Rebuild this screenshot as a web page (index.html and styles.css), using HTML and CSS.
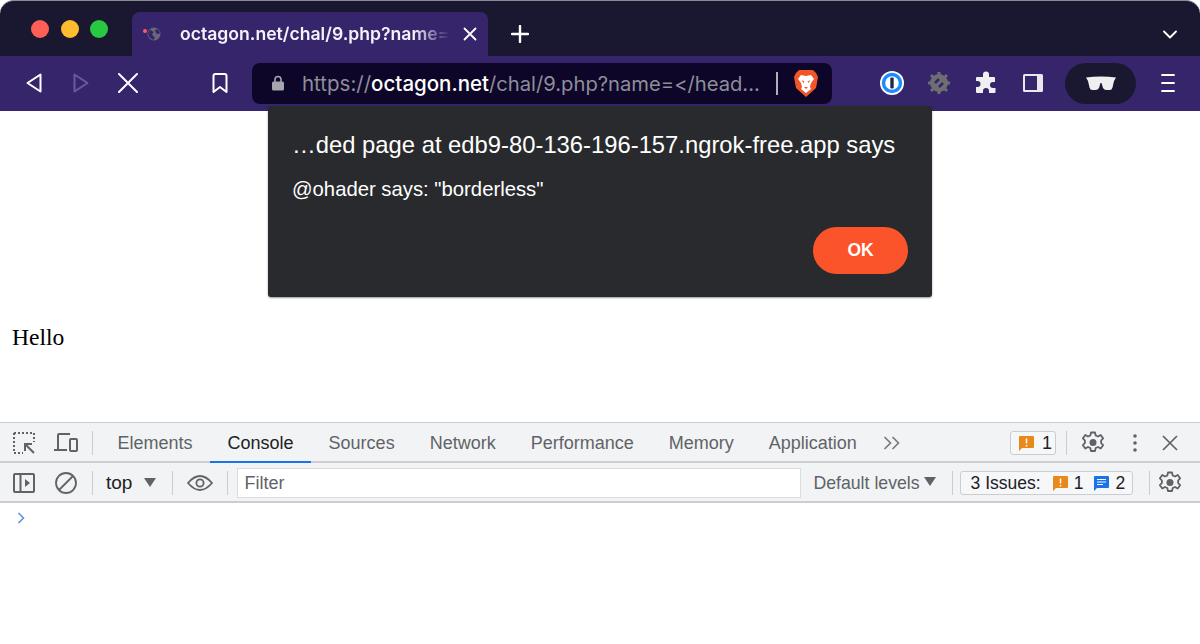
FILE: index.html
```html
<!DOCTYPE html>
<html lang="en">
  <head>
    <meta charset="UTF-8" />
    <meta name="viewport" content="width=device-width, initial-scale=1.0" />
    <title>octagon.net/chal/9.php</title>
    <link rel="stylesheet" href="styles.css">
  </head>
  <body>
    <div class="browser">
      <div class="tabstrip">
        <div class="lights">
          <span class="light red"></span>
          <span class="light yellow"></span>
          <span class="light green"></span>
        </div>
        <div class="tab">
          <span class="tab-dot"></span>
          <svg class="tab-globe" viewBox="0 0 14 14"><circle cx="7" cy="7" r="6.5" fill="#686878"/><path d="M3 2.5 6.5 5 5 7.5 8 11 6 13 2 10 1 6ZM9 2l3 1.5 1 3-3 .5-2-2.500Z" fill="#37256b"/></svg>
          <span class="tab-title">octagon.net/chal/9.php?name=</span>
          <svg class="tab-close" viewBox="0 0 14 14"><path d="M1.500 1.500l11 11M12.500 1.500l-11 11" stroke="#fff" stroke-width="1.800" stroke-linecap="round"/></svg>
        </div>
        <svg class="tab-new" viewBox="0 0 18 18"><path d="M9 1v16M1 9h16" stroke="#fff" stroke-width="2.400" stroke-linecap="round"/></svg>
        <svg class="tab-list" viewBox="0 0 14 9"><path d="M1 1.500l6 6 6-6" fill="none" stroke="#fff" stroke-width="1.800" stroke-linecap="round" stroke-linejoin="round"/></svg>
      </div>

      <div class="toolbar">
        <div class="tb-btn back">
          <svg class="ic-nav" viewBox="0 0 16 20"><path d="M14.500 1.500v17L1.500 10Z" fill="none" stroke="#fff" stroke-width="2" stroke-linejoin="round"/></svg>
        </div>
        <div class="tb-btn">
          <svg class="ic-nav" viewBox="0 0 16 20"><path d="M1.500 1.500v17l13-8.500Z" fill="none" stroke="#6a5a99" stroke-width="2" stroke-linejoin="round"/></svg>
        </div>
        <div class="tb-btn">
          <svg class="ic-stop" viewBox="0 0 20 20"><path d="M1 1l18 18M19 1 1 19" stroke="#fff" stroke-width="2" stroke-linecap="round"/></svg>
        </div>
        <div class="tb-btn bookmark">
          <svg class="ic-mark" viewBox="0 0 16 20"><path d="M1.500 3q0-2 2-2h9q2 0 2 2v16l-6.500-5-6.500 5Z" fill="none" stroke="#fff" stroke-width="2" stroke-linejoin="round"/></svg>
        </div>
        <div class="urlbar">
          <svg class="ic-lock" viewBox="0 0 12 16"><path d="M3 7V4.500a3 3 0 0 1 6 0V7" fill="none" stroke="#a5a5ad" stroke-width="1.600"/><rect y="6.500" width="12" height="9" rx="1.500" fill="#a5a5ad"/></svg>
          <span class="url">https://<b>octagon.net</b><span class="url-path">/chal/9.php?name=&lt;/head...</span></span>
          <span class="url-sep"></span>
          <svg class="ic-brave" viewBox="0 0 24 28">
            <path d="M5 1h14l3 3 2 4-2 11-10 9-10-9L0 8l2-4Z" fill="#f1562b"/>
            <path d="M7 6l5 1 5-1 3 4-3 4-1 4 1 2-5 4-5-4 1-2-1-4-3-4Z" fill="#fff"/>
            <path d="M7.500 11l3 1.500-1 1.500ZM16.500 11l-3 1.500 1 1.500ZM10 18h4l-2 2Z" fill="#f1562b"/>
          </svg>
        </div>
        <div class="tb-btn onepass">
          <svg class="ic-ext" viewBox="0 0 24 24"><circle cx="12" cy="12" r="12" fill="#fff"/><circle cx="12" cy="12" r="8.500" fill="none" stroke="#1a8cff" stroke-width="3.400"/><rect x="10.300" y="6.500" width="3.400" height="11" rx="1" fill="#1d2a4d"/></svg>
        </div>
        <div class="tb-btn">
          <svg class="ic-ext" viewBox="0 0 24 24">
            <path d="M12 1v22M1 12h22M4 4l16 16M20 4 4 20" stroke="#6f6f73" stroke-width="3"/>
            <circle cx="12" cy="12" r="9" fill="#6f6f73"/>
            <path d="M8 12l4-4M12 16l4-4" stroke="#37256b" stroke-width="2.600"/>
          </svg>
        </div>
        <div class="tb-btn">
          <svg class="ic-ext" viewBox="0 0 24 24"><path d="M9 3.500a3 3 0 0 1 6 0V6h5a1 1 0 0 1 1 1v4h-2a3 3 0 0 0 0 6h2.500v4a1 1 0 0 1-1 1H15v-2a3 3 0 0 0-6 0v2H3a1 1 0 0 1-1-1v-5h1.500a3 3 0 0 0 0-6H2V7a1 1 0 0 1 1-1h6Z" fill="#f0f0f2"/></svg>
        </div>
        <div class="tb-btn">
          <svg class="ic-panel" viewBox="0 0 20 18"><rect width="20" height="18" rx="1.500" fill="#e8e8ec"/><rect x="2" y="2" width="12" height="14" fill="#37256b"/></svg>
        </div>
        <div class="incognito">
          <svg class="ic-glasses" viewBox="0 0 30 15"><path d="M0 1.500Q15-.5 30 1.500L28 5l-1.500 6.500q-.5 2.500-3 2.500h-3q-2.500 0-3.500-2L15.500 7h-1L13 12q-1 2-3.500 2h-3q-2.500 0-3-2.500L2 5Z" fill="#efeff1"/></svg>
        </div>
        <div class="tb-btn menu">
          <svg class="ic-menu" viewBox="0 0 14 20"><path d="M1 2h12M1 10h12M1 18h12" stroke="#fff" stroke-width="1.800" stroke-linecap="round"/></svg>
        </div>
      </div>
    </div>

    <div class="page">
      <p class="hello">Hello</p>
      <div class="alert">
        <div class="alert-title">…ded page at edb9-80-136-196-157.ngrok-free.app says</div>
        <div class="alert-msg">@ohader says: "borderless"</div>
        <div class="alert-actions">
          <button class="alert-ok">OK</button>
        </div>
      </div>
    </div>

    <div class="devtools">
      <div class="dt-row tabs-row">
        <div class="dt-icon">
          <svg class="ic-dt" viewBox="0 0 22 22">
            <path d="M1 1h20v9M1 1v20h9" fill="none" stroke="#5f6368" stroke-width="2" stroke-dasharray="2 2"/>
            <path d="M21 21l-8-8M12 19v-7h7" fill="none" stroke="#5f6368" stroke-width="2"/>
          </svg>
        </div>
        <div class="dt-icon">
          <svg class="ic-dt wide" viewBox="0 0 24 20">
            <path d="M15 2V1H5q-1 0-1 1v14M0 17h13" fill="none" stroke="#5f6368" stroke-width="2"/>
            <rect x="16" y="6" width="7" height="12" rx="1" fill="none" stroke="#5f6368" stroke-width="2"/>
          </svg>
        </div>
        <span class="dt-sep"></span>
        <div class="tabs">
          <span class="dt-tab">Elements</span>
          <span class="dt-tab active">Console</span>
          <span class="dt-tab">Sources</span>
          <span class="dt-tab">Network</span>
          <span class="dt-tab">Performance</span>
          <span class="dt-tab">Memory</span>
          <span class="dt-tab">Application</span>
        </div>
        <svg class="ic-more" viewBox="0 0 18 14"><path d="M1.500 1l6 6-6 6M9.500 1l6 6-6 6" fill="none" stroke="#777b80" stroke-width="1.700"/></svg>
        <div class="dt-right">
          <div class="badge top-badge">
            <svg class="ic-warn" viewBox="0 0 15 15"><path d="M0 1q0-1 1-1h13q1 0 1 1v10q0 1-1 1H3l-3 3Z" fill="#e8891c"/><path d="M7.500 2.500v5M7.500 9v1.500" stroke="#fff" stroke-width="1.500"/></svg>
            <span>1</span>
          </div>
          <span class="dt-sep"></span>
          <svg class="ic-gear top-gear" viewBox="0 0 24 24"><use href="#gear"/></svg>
          <svg class="ic-dots" viewBox="0 0 4 18"><circle cx="2" cy="2" r="1.800"/><circle cx="2" cy="9" r="1.800"/><circle cx="2" cy="16" r="1.800"/></svg>
          <svg class="ic-x" viewBox="0 0 16 16"><path d="M1 1l14 14M15 1 1 15" stroke="#5f6368" stroke-width="1.700"/></svg>
        </div>
      </div>

      <div class="dt-row filter-row">
        <div class="dt-icon">
          <svg class="ic-dt" viewBox="0 0 22 20"><rect x="1" y="1" width="20" height="18" rx="1" fill="none" stroke="#5f6368" stroke-width="2"/><path d="M7.500 1v18" stroke="#5f6368" stroke-width="2"/><path d="M12 6l5 4-5 4Z" fill="#5f6368"/></svg>
        </div>
        <div class="dt-icon">
          <svg class="ic-dt" viewBox="0 0 22 22"><circle cx="11" cy="11" r="10" fill="none" stroke="#5f6368" stroke-width="1.800"/><path d="M4 18 18 4" stroke="#5f6368" stroke-width="1.800"/></svg>
        </div>
        <span class="dt-sep"></span>
        <span class="ctx">top</span>
        <span class="arrow ctx-arrow"></span>
        <span class="dt-sep"></span>
        <svg class="ic-eye" viewBox="0 0 26 16"><path d="M1 8q12-14 24 0Q13 22 1 8Z" fill="none" stroke="#5f6368" stroke-width="1.800"/><circle cx="13" cy="8" r="3.600" fill="none" stroke="#5f6368" stroke-width="1.800"/></svg>
        <span class="dt-sep"></span>
        <div class="filter">Filter</div>
        <span class="levels">Default levels</span>
        <span class="arrow levels-arrow"></span>
        <span class="dt-sep"></span>
        <div class="badge issues">
          <span class="issues-label">3 Issues:</span>
          <svg class="ic-warn" viewBox="0 0 15 15"><path d="M0 1q0-1 1-1h13q1 0 1 1v10q0 1-1 1H3l-3 3Z" fill="#e8891c"/><path d="M7.500 2.500v5M7.500 9v1.500" stroke="#fff" stroke-width="1.500"/></svg>
          <span class="issue-count">1</span>
          <svg class="ic-warn info" viewBox="0 0 15 15"><path d="M0 1q0-1 1-1h13q1 0 1 1v10q0 1-1 1H3l-3 3Z" fill="#1a73e8"/><path d="M3 3.500h9M3 6h9M3 8.500h6" stroke="#fff" stroke-width="1.200"/></svg>
          <span class="issue-count">2</span>
        </div>
        <span class="dt-sep"></span>
        <svg class="ic-gear" viewBox="0 0 24 24"><use href="#gear"/></svg>
      </div>

      <div class="console">
        <svg class="ic-prompt" viewBox="0 0 8 12"><path d="M1.500 1l5 5-5 5" fill="none" stroke="#5b8fdc" stroke-width="1.500"/></svg>
      </div>
    </div>

    <svg class="defs" viewBox="0 0 24 24">
      <symbol id="gear" viewBox="0 0 24 24">
        <path d="M10 1.500h4l.7 3 2.300 1 2.700-1.600 2.400 3.400-2 2.200v2.500l2 2.200-2.400 3.400-2.700-1.600-2.300 1-.7 3h-4l-.7-3-2.300-1-2.700 1.600-2.400-3.400 2-2.200V9.500l-2-2.200L4.300 3.900 7 5.500l2.300-1Z" fill="none" stroke="#5f6368" stroke-width="1.800" stroke-linejoin="round"/>
        <circle cx="12" cy="11.500" r="3.500" fill="#5f6368"/>
      </symbol>
    </svg>
  </body>
</html>
```

FILE: styles.css
```css
* {
  box-sizing: border-box;
}
body {
  margin: 0;
  width: 1200px;
  height: 644px;
  overflow: hidden;
  display: flex;
  flex-direction: column;
  background: #fff;
  font-family: "Liberation Sans", Arial, sans-serif;
}
.defs {
  display: none;
}

/* browser chrome */
.browser {
  height: 111px;
  flex: none;
  display: flex;
  flex-direction: column;
  border-radius: 14px 14px 0 0;
  border-top: 1px solid #8d8c96;
  overflow: hidden;
  background: #1a1830;
}
.tabstrip {
  height: 55px;
  flex: none;
  display: flex;
  align-items: flex-end;
  position: relative;
}
.lights {
  width: 132px;
  height: 55px;
  padding: 19px 0 0 31px;
  display: flex;
  gap: 11.600px;
}
.light {
  width: 18px;
  height: 18px;
  border-radius: 50%;
}
.red {
  background: #ff5f57;
}
.yellow {
  background: #febc2e;
}
.green {
  background: #28c840;
}
.tab {
  width: 356px;
  height: 44px;
  display: flex;
  align-items: center;
  background: #37256b;
  border-radius: 8px 8px 0 0;
  padding-left: 11px;
  position: relative;
}
.tab-dot {
  width: 4px;
  height: 4px;
  border-radius: 50%;
  background: #ff5a5f;
  margin-top: -7px;
  flex: none;
}
.tab-globe {
  width: 14px;
  height: 14px;
  flex: none;
}
.tab-title {
  margin-left: 19px;
  margin-bottom: 2px;
  width: 272px;
  overflow: hidden;
  white-space: nowrap;
  font-family: Inter, sans-serif;
  font-size: 17.600px;
  font-weight: 600;
  color: #f4f2fa;
  flex: none;
  -webkit-mask-image: linear-gradient(to right, #000 86%, transparent 99%);
  mask-image: linear-gradient(to right, #000 86%, transparent 99%);
}
.tab-close {
  width: 14px;
  height: 14px;
  margin-left: 11px;
  flex: none;
}
.tab-new {
  width: 18px;
  height: 18px;
  margin: 0 0 13px 23px;
}
.tab-list {
  width: 14px;
  height: 9px;
  margin: 0 23px 17px auto;
}
.toolbar {
  height: 55px;
  flex: none;
  display: flex;
  align-items: center;
  background: #37256b;
  padding-left: 10px;
  padding-bottom: 1px;
}
.tb-btn {
  width: 47px;
  height: 41px;
  flex: none;
  display: flex;
  align-items: center;
  justify-content: center;
}
.bookmark {
  margin-left: 45px;
}
.onepass {
  margin-left: 36px;
}
.menu {
  margin-left: 8px;
}
.ic-nav {
  width: 16px;
  height: 20px;
}
.ic-stop {
  width: 20px;
  height: 20px;
}
.ic-mark {
  width: 16px;
  height: 20px;
}
.ic-ext {
  width: 24px;
  height: 24px;
}
.ic-panel {
  width: 20px;
  height: 18px;
}
.ic-menu {
  width: 14px;
  height: 20px;
}
.urlbar {
  width: 580px;
  height: 41px;
  margin-left: 9px;
  flex: none;
  display: flex;
  align-items: center;
  background: #0d0628;
  border-radius: 8px;
  padding-left: 20px;
}
.ic-lock {
  width: 12px;
  height: 16px;
  flex: none;
}
.url {
  margin-left: 18px;
  width: 474px;
  flex: none;
  white-space: nowrap;
  font-family: Inter, sans-serif;
  font-size: 20.500px;
  color: #8f8d9b;
}
.url b {
  font-weight: 500;
  color: #fff;
}
.url-path {
  font-size: 20.200px;
}
.url-sep {
  width: 2px;
  height: 23px;
  background: #b0aeb8;
  flex: none;
}
.ic-brave {
  width: 24px;
  height: 28px;
  margin-left: 16px;
  flex: none;
}
.incognito {
  width: 71px;
  height: 41px;
  margin-left: 9px;
  flex: none;
  border-radius: 21px;
  background: #1a1830;
  display: flex;
  align-items: center;
  justify-content: center;
}
.ic-glasses {
  width: 30px;
  height: 15px;
}

/* page */
.page {
  height: 311px;
  flex: none;
  padding: 212px 0 0 12px;
  position: relative;
}
.hello {
  margin: 0;
  font-family: "Liberation Serif", "Times New Roman", serif;
  font-size: 23.600px;
  line-height: 28px;
  color: #000;
}
.alert {
  position: absolute;
  left: 268px;
  top: -5px;
  width: 664px;
  height: 191px;
  padding: 25px 24px 23px 24px;
  background: #292a2d;
  border-radius: 3px;
  box-shadow: 0 1px 2px rgba(0, 0, 0, 0.4);
  color: #fff;
  display: flex;
  flex-direction: column;
}
.alert-title {
  font-size: 23.800px;
  line-height: 28px;
  white-space: nowrap;
}
.alert-msg {
  margin-top: 19px;
  font-size: 20.300px;
  line-height: 22px;
}
.alert-actions {
  margin-top: auto;
  display: flex;
  justify-content: flex-end;
}
.alert-ok {
  width: 95px;
  height: 47px;
  border: none;
  border-radius: 24px;
  background: #fb542b;
  color: #fff;
  font-family: inherit;
  font-size: 17.500px;
  font-weight: 700;
}

/* devtools */
.devtools {
  flex: 1;
  display: flex;
  flex-direction: column;
  border-top: 1px solid #cbcdd1;
  background: #fff;
}
.dt-row {
  height: 40px;
  flex: none;
  display: flex;
  align-items: center;
  background: #f1f3f4;
  border-bottom: 2px solid #cbcdd1;
  padding-top: 2px;
  font-size: 18px;
  color: #5f6368;
}
.tabs-row {
  align-items: stretch;
}
.tabs-row > .dt-icon,
.tabs-row > .dt-sep,
.tabs-row > .ic-more,
.tabs-row > .dt-right {
  align-self: center;
}
.dt-icon {
  width: 41px;
  flex: none;
  display: flex;
  justify-content: center;
}
.dt-icon:first-child {
  width: 45px;
  padding-left: 3px;
}
.ic-dt {
  width: 22px;
  height: 22px;
}
.ic-dt.wide {
  width: 24px;
}
.dt-sep {
  width: 1px;
  height: 24px;
  background: #cbcdd1;
  flex: none;
}
.tabs-row > .dt-sep {
  margin-left: 6px;
}
.tabs {
  display: flex;
  margin-left: 7px;
}
.dt-tab {
  padding: 0 17.500px;
  display: flex;
  align-items: center;
  font-size: 18px;
  margin-bottom: -2px;
  border-bottom: 2px solid transparent;
}
.dt-tab.active {
  color: #202124;
  border-bottom-color: #1a73e8;
}
.ic-more {
  width: 18px;
  height: 14px;
  margin-left: 9px;
}
.dt-right {
  margin-left: auto;
  display: flex;
  align-items: center;
}
.badge {
  display: flex;
  align-items: center;
  height: 24px;
  border: 1px solid #cbcdd1;
  border-radius: 3px;
  background: #f6f7f8;
  color: #202124;
}
.top-badge {
  width: 46px;
  padding-left: 8px;
  gap: 8px;
}
.dt-right .dt-sep {
  margin-left: 10px;
}
.ic-warn {
  width: 15px;
  height: 15px;
  flex: none;
}
.ic-gear {
  width: 24px;
  height: 24px;
  flex: none;
}
.top-gear {
  margin-left: 14px;
}
.ic-dots {
  width: 4px;
  height: 18px;
  margin-left: 28px;
  fill: #5f6368;
}
.ic-x {
  width: 16px;
  height: 16px;
  margin: 0 22px 0 25px;
}
.filter-row > .dt-icon + .dt-sep {
  margin-left: 6px;
}
.ctx {
  margin-left: 13px;
  font-size: 19px;
  color: #202124;
}
.arrow {
  width: 0;
  height: 0;
  border-left: 6px solid transparent;
  border-right: 6px solid transparent;
  border-top: 9px solid #5f6368;
  flex: none;
}
.ctx-arrow {
  margin: 0 16px 2px 12px;
}
.ic-eye {
  width: 26px;
  height: 16px;
  margin: 0 14px;
  flex: none;
}
.filter {
  width: 564px;
  height: 30px;
  margin-left: 9px;
  flex: none;
  padding-left: 6px;
  background: #fff;
  border: 1px solid #dadce0;
  font-size: 18px;
  line-height: 28px;
}
.levels {
  margin-left: 12px;
  font-size: 17.700px;
}
.levels-arrow {
  margin: 0 16px 4px 4px;
}
.issues {
  width: 173px;
  margin-left: 7px;
  padding-left: 10px;
  font-size: 17.500px;
  white-space: nowrap;
}
.issues-label {
  margin-right: 12px;
}
.issue-count {
  margin: 0 11px 0 6px;
}
.filter-row > .issues + .dt-sep {
  margin-left: 16px;
}
.filter-row > .ic-gear {
  margin-left: 8px;
}
.console {
  flex: 1;
  padding: 9px 0 0 17px;
}
.ic-prompt {
  display: block;
  width: 8px;
  height: 12px;
}
```
